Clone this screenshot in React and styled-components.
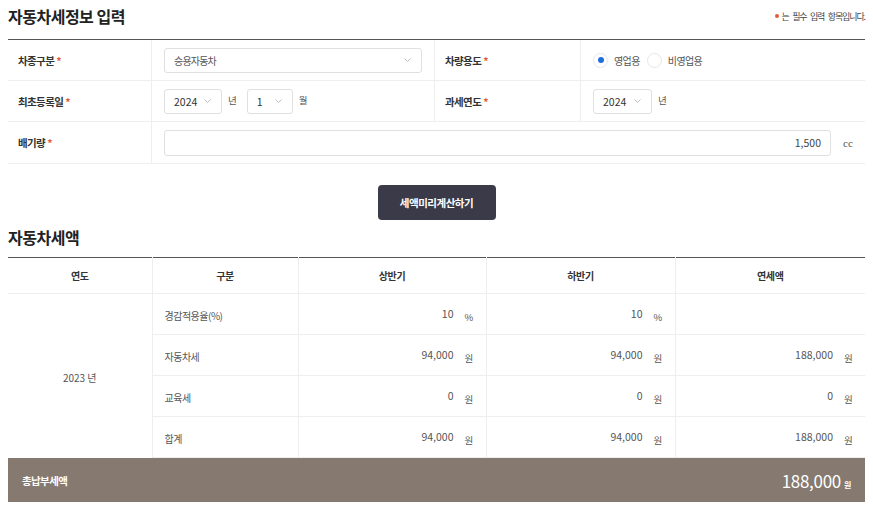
import * as React from "react";
import styled, { createGlobalStyle } from "styled-components";

export default function App() {
  const rows = [
    { label: "경감적용율(%)", first: "10", second: "10", total: "", unit: "%" },
    { label: "자동차세", first: "94,000", second: "94,000", total: "188,000", unit: "원" },
    { label: "교육세", first: "0", second: "0", total: "0", unit: "원" },
    { label: "합계", first: "94,000", second: "94,000", total: "188,000", unit: "원" },
  ];
  return (
    <Page>
      <GlobalStyle />
      <Header>
        <Title>자동차세정보 입력</Title>
        <Note>
          <Dot />는 필수 입력 항목입니다.
        </Note>
      </Header>
      <FormGrid>
        <Cell $label>
          <Label>
            차종구분<Req>*</Req>
          </Label>
        </Cell>
        <Cell>
          <Select $w={260}>
            <SelectText $hangul>승용자동차</SelectText>
            <Chevron />
          </Select>
        </Cell>
        <Cell $label>
          <Label>
            차량용도<Req>*</Req>
          </Label>
        </Cell>
        <Cell $last>
          <RadioGroup>
            <Radio $checked />
            <RadioText>영업용</RadioText>
            <Radio />
            <RadioText>비영업용</RadioText>
          </RadioGroup>
        </Cell>

        <Cell $label>
          <Label>
            최초등록일<Req>*</Req>
          </Label>
        </Cell>
        <Cell>
          <Select $w={58}>
            <SelectText>2024</SelectText>
            <Chevron />
          </Select>
          <DateUnit>년</DateUnit>
          <Select $w={46}>
            <SelectText>1</SelectText>
            <Chevron />
          </Select>
          <DateUnit>월</DateUnit>
        </Cell>
        <Cell $label>
          <Label>
            과세연도<Req>*</Req>
          </Label>
        </Cell>
        <Cell $last>
          <Select $w={59}>
            <SelectText>2024</SelectText>
            <Chevron />
          </Select>
          <DateUnit>년</DateUnit>
        </Cell>

        <Cell $label $h={42}>
          <Label>
            배기량<Req>*</Req>
          </Label>
        </Cell>
        <Cell $span={3} $last $h={42}>
          <NumberInput>1,500</NumberInput>
          <Cc>cc</Cc>
        </Cell>
      </FormGrid>

      <ButtonRow>
        <CalcButton>세액미리계산하기</CalcButton>
      </ButtonRow>

      <SectionHead>
        <Title>자동차세액</Title>
      </SectionHead>
      <Table>
        <colgroup>
          <col style={{ width: 144 }} />
          <col style={{ width: 146 }} />
          <col style={{ width: 188 }} />
          <col style={{ width: 189 }} />
          <col style={{ width: 190 }} />
        </colgroup>
        <thead>
          <tr>
            <Th>연도</Th>
            <Th>구분</Th>
            <Th>상반기</Th>
            <Th>하반기</Th>
            <Th $last>연세액</Th>
          </tr>
        </thead>
        <tbody>
          {rows.map((r, i) => (
            <tr key={r.label}>
              {i === 0 && <YearTd rowSpan={4}>2023 년</YearTd>}
              <NameTd>{r.label}</NameTd>
              <ValueTd>
                {r.first}
                <Unit>{r.unit}</Unit>
              </ValueTd>
              <ValueTd>
                {r.second}
                <Unit>{r.unit}</Unit>
              </ValueTd>
              <ValueTd $last>
                {r.total && (
                  <>
                    {r.total}
                    <Unit>{r.unit}</Unit>
                  </>
                )}
              </ValueTd>
            </tr>
          ))}
        </tbody>
      </Table>
      <TotalBar>
        <TotalLabel>총납부세액</TotalLabel>
        <TotalAmount>
          188,000<TotalUnit>원</TotalUnit>
        </TotalAmount>
      </TotalBar>
    </Page>
  );
}

const Chevron = () => (
  <svg width="7" height="4" viewBox="0 0 7 4">
    <polyline
      points="0.5,0.5 3.5,3.5 6.5,0.5"
      fill="none"
      stroke="#b5b5b5"
      strokeWidth="0.9"
    />
  </svg>
);

const GlobalStyle = createGlobalStyle`
  body {
    margin: 0;
    background: #fff;
    font-family: "Noto Sans CJK KR", "Noto Sans", sans-serif;
    color: #333;
  }
`;

const Page = styled.div`
  width: 857px;
  padding: 0 8px;
`;

const Header = styled.div`
  display: flex;
  justify-content: space-between;
  align-items: center;
  height: 40px;
  box-sizing: border-box;
  padding-bottom: 7px;
  border-bottom: 1px solid #555;
`;

const Title = styled.h2`
  margin: 0;
  font-size: 16px;
  font-weight: 700;
  letter-spacing: -0.5px;
  color: #222;
`;

const Note = styled.p`
  margin: 0;
  display: flex;
  align-items: center;
  font-size: 9px;
  letter-spacing: -1.1px;
  word-spacing: 2.5px;
  color: #444;
`;

const Dot = styled.span`
  width: 4px;
  height: 4px;
  border-radius: 50%;
  background: #e35a3b;
  margin-right: 3px;
`;

const FormGrid = styled.div`
  display: grid;
  grid-template-columns: 144px 283px 146px 284px;
`;

const Cell = styled.div`
  display: flex;
  align-items: center;
  height: ${(p) => p.$h || 41}px;
  box-sizing: border-box;
  padding: 0 ${(p) => (p.$label ? 10 : 12)}px;
  border-bottom: 1px solid #eeeeee;
  border-right: ${(p) => (p.$last ? "none" : "1px solid #eeeeee")};
  grid-column: span ${(p) => p.$span || 1};
`;

const Label = styled.span`
  font-size: 10.5px;
  font-weight: 700;
  letter-spacing: -0.6px;
  color: #333;
`;

const Req = styled.span`
  color: #e35a3b;
  margin-left: 2px;
`;

const Select = styled.div`
  display: flex;
  align-items: center;
  justify-content: space-between;
  width: ${(p) => p.$w}px;
  height: 25px;
  box-sizing: border-box;
  padding: 0 10px 0 9px;
  border: 1px solid #e0e0e0;
  border-radius: 3px;
  background: #fff;
  color: #444;
`;

const SelectText = styled.span`
  font-size: ${(p) => (p.$hangul ? 10 : 10.5)}px;
  letter-spacing: ${(p) => (p.$hangul ? -0.8 : 0)}px;
  color: ${(p) => (p.$hangul ? "#555" : "#333")};
`;

const DateUnit = styled.span`
  align-self: flex-start;
  margin: 12px 10px 0 6px;
  font-size: 9.5px;
  color: #555;
`;

const RadioGroup = styled.div`
  display: flex;
  align-items: center;
`;

const Radio = styled.span`
  display: flex;
  align-items: center;
  justify-content: center;
  width: 15px;
  height: 15px;
  box-sizing: border-box;
  border-radius: 50%;
  border: 1px solid #e6e6e6;
  background: #fff;
  &::after {
    content: "";
    width: 6px;
    height: 6px;
    border-radius: 50%;
    background: ${(p) => (p.$checked ? "#1f6fd8" : "transparent")};
  }
`;

const RadioText = styled.span`
  margin: 0 7px 0 6px;
  font-size: 10px;
  letter-spacing: -0.6px;
  color: #555;
`;

const NumberInput = styled.div`
  flex: 1;
  height: 26px;
  box-sizing: border-box;
  display: flex;
  align-items: center;
  justify-content: flex-end;
  padding-right: 9px;
  border: 1px solid #e0e0e0;
  border-radius: 3px;
  font-size: 10.5px;
  color: #444;
`;

const Cc = styled.span`
  width: 10px;
  margin-left: 12px;
  font-family: "Liberation Serif", serif;
  font-size: 11px;
  color: #555;
`;

const ButtonRow = styled.div`
  display: flex;
  justify-content: center;
  padding-top: 21px;
`;

const CalcButton = styled.button`
  width: 118px;
  height: 35px;
  border: none;
  border-radius: 4px;
  background: #3b3a48;
  color: #fff;
  font-family: inherit;
  font-size: 10.5px;
  font-weight: 700;
  letter-spacing: -0.5px;
`;

const SectionHead = styled.div`
  display: flex;
  align-items: center;
  height: 37px;
  box-sizing: border-box;
  padding-bottom: 4px;
`;

const Table = styled.table`
  width: 857px;
  border-collapse: collapse;
  table-layout: fixed;
  border-top: 1px solid #555;
`;

const Th = styled.th`
  height: 35px;
  padding: 0;
  font-size: 10px;
  font-weight: 700;
  letter-spacing: -0.4px;
  color: #333;
  border-bottom: 1px solid #eeeeee;
  border-right: ${(p) => (p.$last ? "none" : "1px solid #eeeeee")};
`;

const YearTd = styled.td`
  padding-top: 4px;
  text-align: center;
  font-size: 10px;
  color: #555;
  border-right: 1px solid #eeeeee;
`;

const NameTd = styled.td`
  height: 38px;
  padding: 2px 12px 0;
  font-size: 10px;
  letter-spacing: -0.5px;
  color: #555;
  border-bottom: 1px solid #eeeeee;
  border-right: 1px solid #eeeeee;
`;

const ValueTd = styled.td`
  padding: 2px 11px 0 0;
  text-align: right;
  font-size: 10.5px;
  color: #555;
  border-bottom: 1px solid #eeeeee;
  border-right: ${(p) => (p.$last ? "none" : "1px solid #eeeeee")};
`;

const Unit = styled.span`
  display: inline-block;
  width: 10px;
  margin-left: 11px;
  font-size: 9.5px;
  text-align: left;
  vertical-align: -3px;
`;

const TotalBar = styled.div`
  display: flex;
  justify-content: space-between;
  align-items: center;
  height: 44px;
  padding: 0 14px;
  background: #86796f;
  color: #fff;
`;

const TotalLabel = styled.span`
  font-size: 10.5px;
  font-weight: 700;
  letter-spacing: -0.6px;
`;

const TotalAmount = styled.span`
  font-size: 17px;
  letter-spacing: -0.3px;
`;

const TotalUnit = styled.span`
  margin-left: 3px;
  font-size: 8px;
  font-weight: 700;
`;
